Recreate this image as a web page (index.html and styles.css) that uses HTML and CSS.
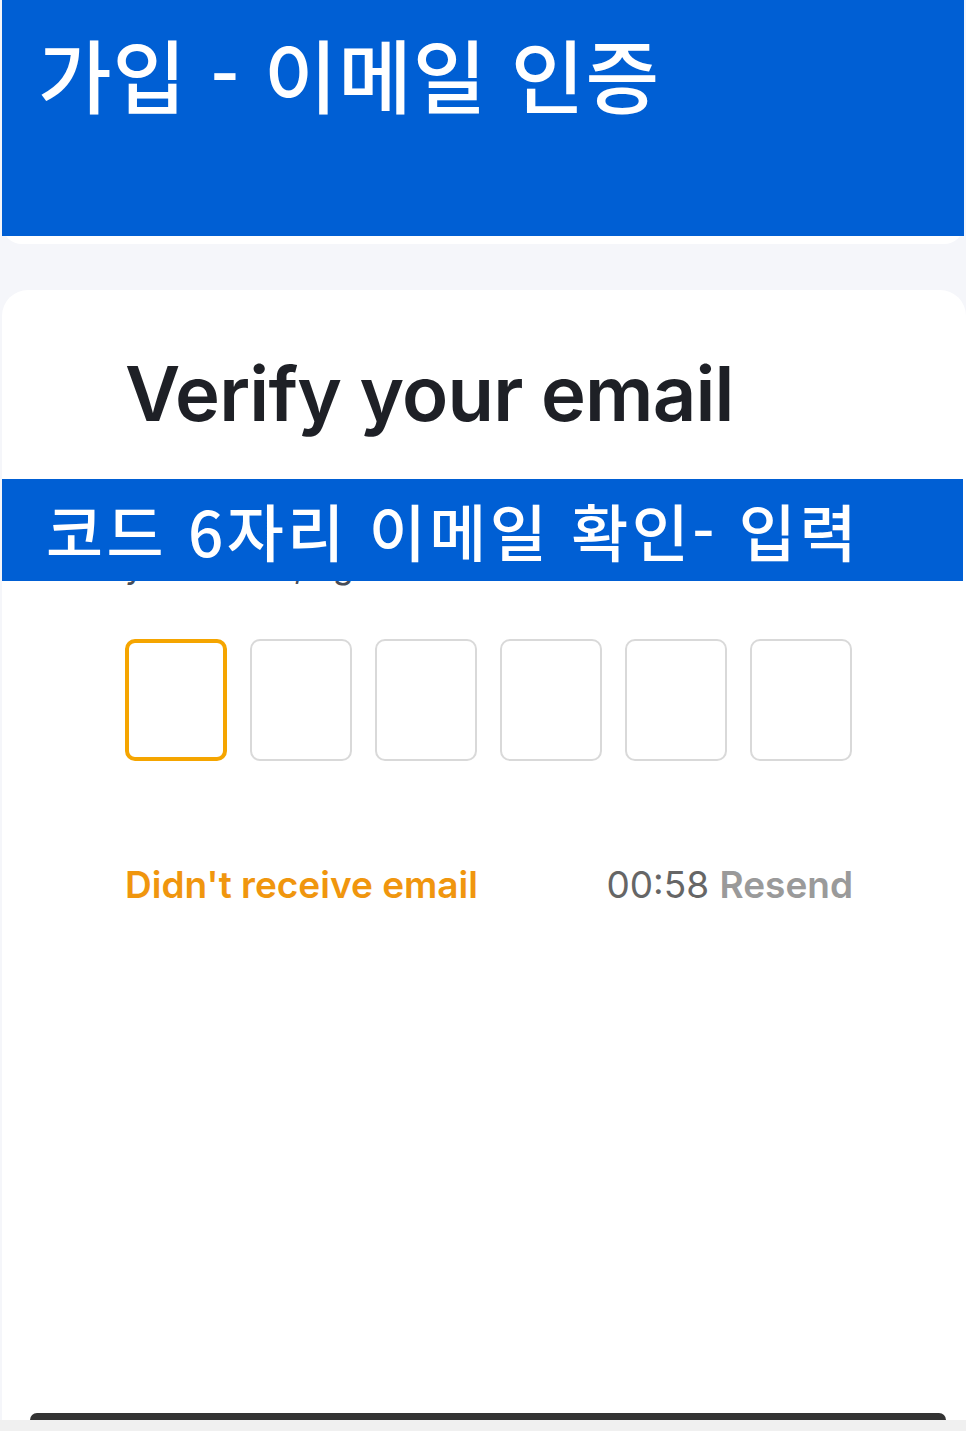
FILE: index.html
```html
<!DOCTYPE html>
<html lang="ko">
<head>
<meta charset="utf-8">
<title>가입 - 이메일 인증</title>
<link rel="stylesheet" href="styles.css">
</head>
<body>
<div class="page">
  <header class="top-card">
    <div class="top-banner">
      <h1 class="top-title">가입 - 이메일 인증</h1>
    </div>
  </header>

  <main class="card">
    <h2 class="heading">Verify your email</h2>
    <p class="desc">Please enter the 6-digit code sent to<br>your inbox, eg.</p>

    <div class="code-row">
      <div class="code-box active"></div>
      <div class="code-box"></div>
      <div class="code-box"></div>
      <div class="code-box"></div>
      <div class="code-box"></div>
      <div class="code-box"></div>
    </div>

    <div class="links">
      <span class="no-email">Didn't receive email</span>
      <span class="resend"><span class="timer">00:58</span> <span class="resend-label">Resend</span></span>
    </div>

    <div class="spacer"></div>
    <div class="bottom-btn"></div>

    <div class="note-banner">코드 6자리 이메일 확인- 입력</div>
  </main>
</div>
</body>
</html>
```

FILE: styles.css
```css
html, body {
  margin: 0;
  padding: 0;
}
body {
  background: #f0f0f0;
  font-family: "Inter", "Liberation Sans", "Noto Sans CJK KR", sans-serif;
}
.page {
  width: 966px;
  height: 1420px;
  background: #f5f6fa;
  padding-left: 2px;
  box-sizing: border-box;
  overflow: hidden;
}
.top-card {
  background: #ffffff;
  height: 244px;
  margin-right: 2px;
  border-radius: 0 0 20px 20px;
}
.top-banner {
  background: #005fd4;
  height: 236px;
  box-sizing: border-box;
  padding: 20px 0 0 36px;
}
.top-title {
  margin: 0;
  color: #ffffff;
  font-family: "Noto Sans CJK KR", sans-serif;
  font-weight: 500;
  font-size: 80px;
  line-height: 104px;
  letter-spacing: 1px;
}
.card {
  position: relative;
  margin-top: 46px;
  background: #ffffff;
  border-radius: 26px 26px 0 0;
  height: 1130px;
  box-sizing: border-box;
  padding: 53px 0 0 123px;
  display: flex;
  flex-direction: column;
  overflow: hidden;
}
.heading {
  margin: 0;
  font-family: "Inter", sans-serif;
  font-weight: 600;
  font-size: 76px;
  line-height: 100px;
  letter-spacing: -0.8px;
  color: #1e2026;
}
.desc {
  margin: 54px 0 0 0;
  font-size: 34px;
  line-height: 46px;
  color: #474d57;
}
.code-row {
  display: flex;
  gap: 23px;
  margin-top: 50px;
}
.code-box {
  width: 102px;
  height: 122px;
  box-sizing: border-box;
  border: 2px solid #d9d9d9;
  border-radius: 10px;
}
.code-box.active {
  border: 4px solid #f5a500;
}
.links {
  display: flex;
  justify-content: space-between;
  width: 728px;
  margin-top: 100px;
  font-size: 37px;
  line-height: 48px;
}
.no-email {
  color: #f0960e;
  font-weight: 600;
}
.timer {
  color: #666666;
}
.resend-label {
  color: #9a9a9a;
  font-weight: 600;
}
.spacer {
  flex: 1;
}
.bottom-btn {
  height: 7px;
  margin-left: -95px;
  width: 916px;
  background: #333333;
  border-radius: 8px 8px 0 0;
}
.note-banner {
  position: absolute;
  left: -2px;
  top: 189px;
  width: 963px;
  height: 102px;
  box-sizing: border-box;
  background: #005fd4;
  color: #ffffff;
  font-family: "Noto Sans CJK KR", sans-serif;
  font-weight: 500;
  font-size: 62px;
  line-height: 102px;
  padding-left: 46px;
  letter-spacing: 3.5px;
}
```
